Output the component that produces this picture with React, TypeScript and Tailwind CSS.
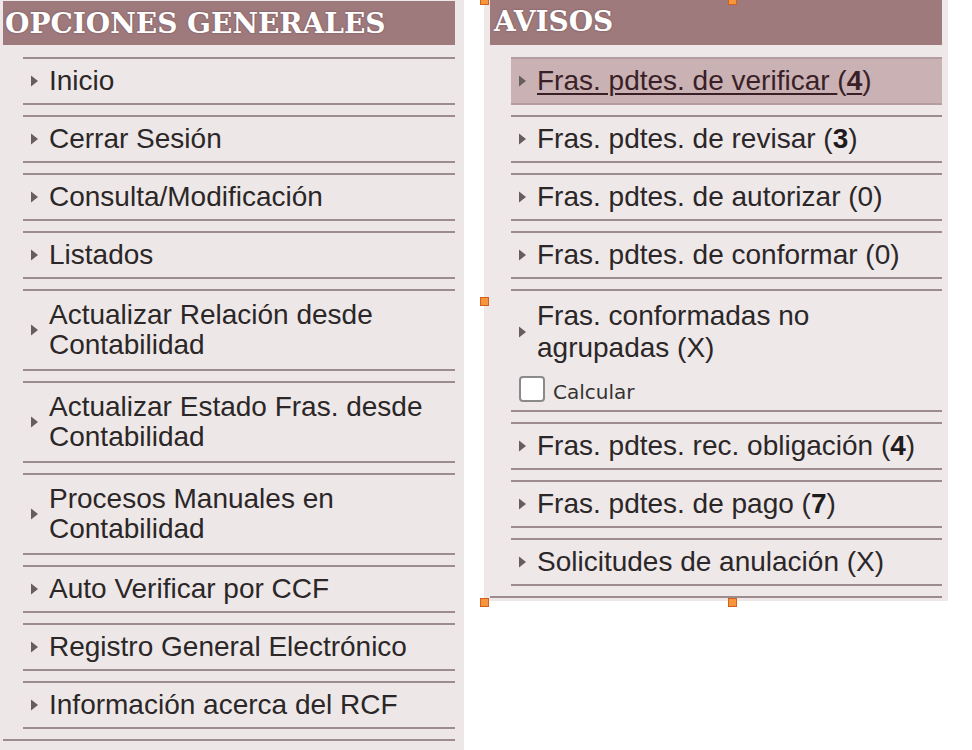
import React from 'react';

type Item = {
  label: React.ReactNode;
  double?: boolean;
};

const leftItems: Item[] = [
  { label: 'Inicio' },
  { label: 'Cerrar Sesión' },
  { label: 'Consulta/Modificación' },
  { label: 'Listados' },
  { label: <>Actualizar Relación desde<br />Contabilidad</>, double: true },
  { label: <>Actualizar Estado Fras. desde<br />Contabilidad</>, double: true },
  { label: <>Procesos Manuales en<br />Contabilidad</>, double: true },
  { label: 'Auto Verificar por CCF' },
  { label: 'Registro General Electrónico' },
  { label: 'Información acerca del RCF' },
];

const Arrow = () => (
  <svg width="7" height="12" viewBox="0 0 7 12" className="shrink-0">
    <polygon points="0,0.5 7,6 0,11.5" fill="#675d5f" />
  </svg>
);

const Count = ({ n, bold }: { n: string; bold?: boolean }) => (
  <>
    ({bold ? <b className="font-bold text-[#1f1b1c]">{n}</b> : n})
  </>
);

const MenuRow = ({ item }: { item: Item }) => (
  <li
    className={`flex items-center border-y-2 border-[#9c8c8e] pl-[8px] ${
      item.double ? 'py-[9px]' : 'py-[7px]'
    }`}
  >
    <Arrow />
    <span className="ml-[11px] leading-[30px]">{item.label}</span>
  </li>
);

const Handle = ({ className }: { className: string }) => (
  <div
    className={`absolute h-[9px] w-[9px] border border-[#d2601c] bg-[#f6953c] ${className}`}
  />
);

export default function App() {
  return (
    <div className="relative flex min-h-[750px] bg-white font-['Liberation_Sans',Arial,sans-serif] text-[28px] text-[#2b2728]">
      {/* Opciones generales */}
      <div className="h-[750px] w-[464px] bg-[#eee7e7] pl-[3px] pr-[9px] pt-px">
        <h2 className="h-[44px] bg-[#9f7a7d] pl-[2px] pt-[2px] font-['DejaVu_Serif',serif] text-[28px] font-bold leading-[42px] text-white [text-shadow:0_0_2px_rgba(60,30,35,0.5)]">
          OPCIONES GENERALES
        </h2>
        <ul className="mt-[12px] flex flex-col gap-[10px] pl-[20px]">
          {leftItems.map((item, i) => (
            <MenuRow key={i} item={item} />
          ))}
        </ul>
        <div className="mt-[10px] h-[2px] bg-[#9c8c8e]" />
      </div>

      {/* Avisos */}
      <div className="ml-[20px] h-[601px] w-[464px] bg-[#efe8e9] px-[6px]">
        <h2 className="h-[45px] bg-[#9f7a7d] pl-[4px] font-['DejaVu_Serif',serif] text-[28px] font-bold leading-[44px] text-white [text-shadow:0_0_2px_rgba(60,30,35,0.5)]">
          AVISOS
        </h2>
        <ul className="mt-[12px] flex flex-col gap-[10px] pl-[21px]">
          <li className="flex items-center border-y-2 border-[#b59ca0] bg-[#c9b1b4] py-[7px] pl-[8px]">
            <Arrow />
            <span className="ml-[11px] leading-[30px] text-[#3a1f27]">
              <span className="underline decoration-2 underline-offset-[3px]">Fras. pdtes. de verificar </span>(
              <b className="font-bold underline decoration-2 underline-offset-[3px]">4</b>)
            </span>
          </li>
          <MenuRow item={{ label: <>Fras. pdtes. de revisar <Count n="3" bold /></> }} />
          <MenuRow item={{ label: <>Fras. pdtes. de autorizar <Count n="0" /></> }} />
          <MenuRow item={{ label: <>Fras. pdtes. de conformar <Count n="0" /></> }} />
          <li className="border-y-2 border-[#9c8c8e] pb-[8px] pl-[8px] pt-[9px]">
            <div className="flex items-center">
              <Arrow />
              <span className="ml-[11px] leading-[32px]">
                Fras. conformadas no
                <br />
                agrupadas (X)
              </span>
            </div>
            <label className="mt-[10px] flex h-[28px] items-end gap-[8px]">
              <input
                type="checkbox"
                className="h-[26px] w-[26px] appearance-none rounded-[4px] border-2 border-[#8a8a8a] bg-white"
              />
              <span className="font-['DejaVu_Sans',Verdana,sans-serif] text-[20px] leading-[20px] text-[#333]">
                Calcular
              </span>
            </label>
          </li>
          <MenuRow item={{ label: <>Fras. pdtes. rec. obligación <Count n="4" bold /></> }} />
          <MenuRow item={{ label: <>Fras. pdtes. de pago <Count n="7" bold /></> }} />
          <MenuRow item={{ label: <>Solicitudes de anulación (X)</> }} />
        </ul>
        <div className="mt-[10px] h-[2px] bg-[#9c8c8e]" />
      </div>

      {/* selection handles */}
      <Handle className="left-[480px] top-[-4px]" />
      <Handle className="left-[728px] top-[-4px]" />
      <Handle className="left-[480px] top-[297px]" />
      <Handle className="left-[480px] top-[598px]" />
      <Handle className="left-[728px] top-[598px]" />
    </div>
  );
}
